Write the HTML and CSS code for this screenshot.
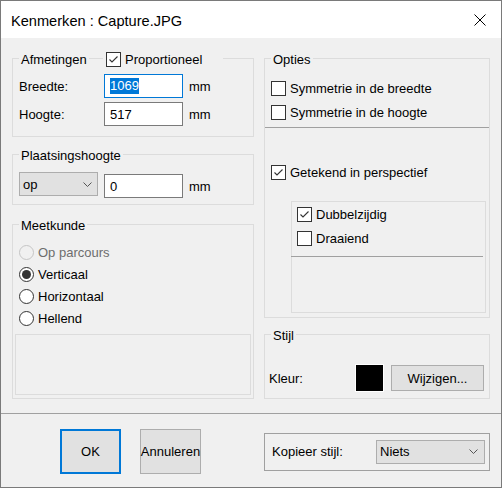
FILE: index.html
```html
<!DOCTYPE html>
<html lang="nl">
<head>
<meta charset="utf-8">
<title>Kenmerken : Capture.JPG</title>
<link rel="stylesheet" href="styles.css">
</head>
<body>
<div class="window">
  <div class="titlebar">
    <span class="title">Kenmerken : Capture.JPG</span>
    <svg class="close" viewBox="0 0 12 12" width="12" height="12"><path d="M0.5 0.5 L11.5 11.5 M11.5 0.5 L0.5 11.5" stroke="#000" stroke-width="1" fill="none"/></svg>
  </div>
  <div class="content">
    <div class="columns">
      <div class="col col-left">
        <div class="group g-afm">
          <span class="legend">Afmetingen</span>
          <label class="check legend-check">
            <span class="box"><svg viewBox="0 0 13 13" width="13" height="13"><polyline points="2.5,6.5 5,9 10.5,3.5" fill="none" stroke="#333" stroke-width="1.1"/></svg></span>
            <span>Proportioneel</span>
          </label>
          <div class="field-row first">
            <span class="lbl">Breedte:</span>
            <span class="input focus"><span class="sel">1069</span></span>
            <span class="unit">mm</span>
          </div>
          <div class="field-row second">
            <span class="lbl">Hoogte:</span>
            <span class="input">517</span>
            <span class="unit">mm</span>
          </div>
        </div>

        <div class="group g-plaats">
          <span class="legend">Plaatsingshoogte</span>
          <div class="plaats-row">
            <span class="combo combo-op">op<svg class="chev" viewBox="0 0 9 5" width="9" height="5"><polyline points="0.5,0.5 4.5,4.5 8.5,0.5" fill="none" stroke="#555" stroke-width="1"/></svg></span>
            <span class="input input-plaats">0</span>
            <span class="unit unit-plaats">mm</span>
          </div>
        </div>

        <div class="group g-meet">
          <span class="legend">Meetkunde</span>
          <div class="radios">
            <div class="radio disabled"><span class="circle"></span><span>Op parcours</span></div>
            <div class="radio"><span class="circle on"></span><span>Verticaal</span></div>
            <div class="radio"><span class="circle"></span><span>Horizontaal</span></div>
            <div class="radio"><span class="circle"></span><span>Hellend</span></div>
          </div>
          <div class="inner-empty"></div>
        </div>
      </div>

      <div class="col col-right">
        <div class="group g-opties">
          <span class="legend">Opties</span>
          <div class="checks sym">
            <div class="check"><span class="box"></span><span>Symmetrie in de breedte</span></div>
            <div class="check"><span class="box"></span><span>Symmetrie in de hoogte</span></div>
          </div>
          <div class="sep"></div>
          <div class="check persp">
            <span class="box"><svg viewBox="0 0 13 13" width="13" height="13"><polyline points="2.5,6.5 5,9 10.5,3.5" fill="none" stroke="#333" stroke-width="1.1"/></svg></span>
            <span>Getekend in perspectief</span>
          </div>
          <div class="subgroup">
            <div class="checks sub">
              <div class="check"><span class="box"><svg viewBox="0 0 13 13" width="13" height="13"><polyline points="2.5,6.5 5,9 10.5,3.5" fill="none" stroke="#333" stroke-width="1.1"/></svg></span><span>Dubbelzijdig</span></div>
              <div class="check"><span class="box"></span><span>Draaiend</span></div>
            </div>
            <div class="sep sub-sep"></div>
          </div>
        </div>

        <div class="group g-stijl">
          <span class="legend">Stijl</span>
          <div class="kleur-row">
            <span class="lbl-kleur">Kleur:</span>
            <span class="swatch"></span>
            <span class="btn btn-wijzig">Wijzigen...</span>
          </div>
        </div>
      </div>
    </div>

    <div class="footer-line"></div>
    <div class="footer">
      <span class="btn btn-big btn-ok">OK</span>
      <span class="btn btn-big">Annuleren</span>
      <div class="kopieer">
        <span>Kopieer stijl:</span>
        <span class="combo combo-niets">Niets<svg class="chev" viewBox="0 0 9 5" width="9" height="5"><polyline points="0.5,0.5 4.5,4.5 8.5,0.5" fill="none" stroke="#555" stroke-width="1"/></svg></span>
      </div>
    </div>
  </div>
</div>
</body>
</html>
```

FILE: styles.css
```css
* { box-sizing: border-box; }
html, body { margin: 0; padding: 0; }
body {
  width: 502px;
  height: 488px;
  overflow: hidden;
  font-family: "Liberation Sans", Arial, sans-serif;
  font-size: 13px;
  line-height: 15px;
  color: #000;
  background: #f0f0f0;
}
.window {
  width: 502px;
  height: 488px;
  border: 1px solid #7a7a7a;
  background: #f0f0f0;
  display: flex;
  flex-direction: column;
}
.titlebar {
  flex: none;
  height: 37px;
  background: #fff;
  display: flex;
  align-items: flex-start;
  padding: 11px 15px 0 10px;
}
.title { font-size: 14.6px; line-height: 18px; }
.close { margin-left: auto; margin-top: 2px; display: block; }

.content { padding: 20px 0 0 0; flex: 1; display: flex; flex-direction: column; }
.columns { display: flex; gap: 10px; padding: 0 11px; }
.col { display: flex; flex-direction: column; }
.col-left { width: 242px; }
.col-right { width: 226px; }

.group { border: 1px solid #dcdcdc; position: relative; }
.legend {
  display: block;
  width: max-content;
  height: 15px;
  margin: -7px 0 0 6px;
  padding: 0 2px;
  background: #f0f0f0;
}

/* checkbox */
.check { display: flex; align-items: center; height: 15px; gap: 4px; white-space: nowrap; }
.box {
  width: 15px; height: 15px; flex: none;
  border: 1px solid #333;
  background: #fff;
  display: block;
}
.box svg { display: block; }

/* Afmetingen */
.g-afm { height: 79px; }
.legend-check {
  position: absolute;
  top: -7px;
  left: 90px;
  width: 120px;
  padding-left: 3px;
  background: #f0f0f0;
}
.field-row { display: flex; align-items: center; height: 24px; padding-left: 6px; }
.field-row.first { margin-top: 7px; }
.field-row.second { margin-top: 4px; }
.lbl { width: 85px; }
.input {
  width: 79px; height: 24px; flex: none;
  border: 1px solid #7a7a7a;
  background: #fff;
  padding-left: 5px;
  display: flex; align-items: center;
}
.input.focus { border-color: #0078d7; }
.sel { background: #0078d7; color: #fff; line-height: 16px; }
.unit { margin-left: 6px; }

/* Plaatsingshoogte */
.g-plaats { height: 51px; margin-top: 17px; }
.plaats-row { display: flex; align-items: flex-start; margin-top: 9px; padding-left: 6px; }
.combo {
  display: flex; align-items: center;
  height: 24px;
  border: 1px solid #adadad;
  background: #e1e1e1;
  padding-left: 3px;
  position: relative;
}
.combo .chev { margin-left: auto; display: block; }
.combo-op { width: 79px; padding-right: 5px; }
.input-plaats { margin-left: 6px; margin-top: 2px; }
.unit-plaats { margin-top: 7px; }

/* Meetkunde */
.g-meet { height: 175px; margin-top: 19px; }
.radios { margin-top: 8px; padding-left: 6px; }
.radio { display: flex; align-items: center; height: 22px; gap: 4px; }
.circle {
  width: 15px; height: 15px; flex: none;
  border: 1px solid #333;
  border-radius: 50%;
  background: #fff;
  display: flex; align-items: center; justify-content: center;
}
.circle.on::after {
  content: "";
  width: 9px; height: 9px;
  border-radius: 50%;
  background: #333;
}
.radio.disabled { color: #6d6d6d; }
.radio.disabled .circle { border-color: #c5c5c5; background: #f0f0f0; }
.inner-empty {
  margin: 5px 2px 0 2px;
  height: 61px;
  border: 1px solid #dcdcdc;
}

/* Opties */
.g-opties { height: 260px; }
.checks { display: flex; flex-direction: column; gap: 9px; }
.checks.sym { margin-top: 14px; padding-left: 6px; }
.sep { height: 1px; background: #a0a0a0; }
.g-opties > .sep { margin-top: 7px; }
.persp { margin-top: 37px; padding-left: 6px; }
.subgroup {
  margin: 21px 3px 0 26px;
  height: 112px;
  border: 1px solid #dcdcdc;
}
.checks.sub { padding: 5px 0 0 5px; }
.sub-sep { margin: 10px 2px 0 -1px; }

/* Stijl */
.g-stijl { height: 65px; margin-top: 16px; }
.kleur-row { display: flex; align-items: center; height: 28px; margin-top: 21px; padding-left: 4px; }
.lbl-kleur { width: 86px; }
.swatch {
  width: 29px; height: 28px; flex: none;
  background: #000;
  border: 1px solid #fff;
}
.btn {
  display: flex; align-items: center; justify-content: center;
  border: 1px solid #adadad;
  background: #e1e1e1;
  white-space: nowrap;
}
.btn-wijzig { width: 93px; height: 26px; margin-left: 7px; }

/* Footer */
.footer-line { height: 1px; background: #a0a0a0; margin-top: 14px; }
.footer {
  display: flex;
  align-items: center;
  padding: 15px 11px 0 59px;
  height: 60px;
}
.btn-big { width: 61px; height: 45px; }
.btn-ok { border: 2px solid #0078d7; }
.btn-big + .btn-big { margin-left: 19px; }
.kopieer {
  margin-left: auto;
  width: 226px;
  height: 38px;
  border: 1px solid #a0a0a0;
  display: flex;
  align-items: center;
  padding-left: 7px;
}
.combo-niets { width: 109px; margin-left: auto; margin-right: 4px; padding-right: 6px; }
```
